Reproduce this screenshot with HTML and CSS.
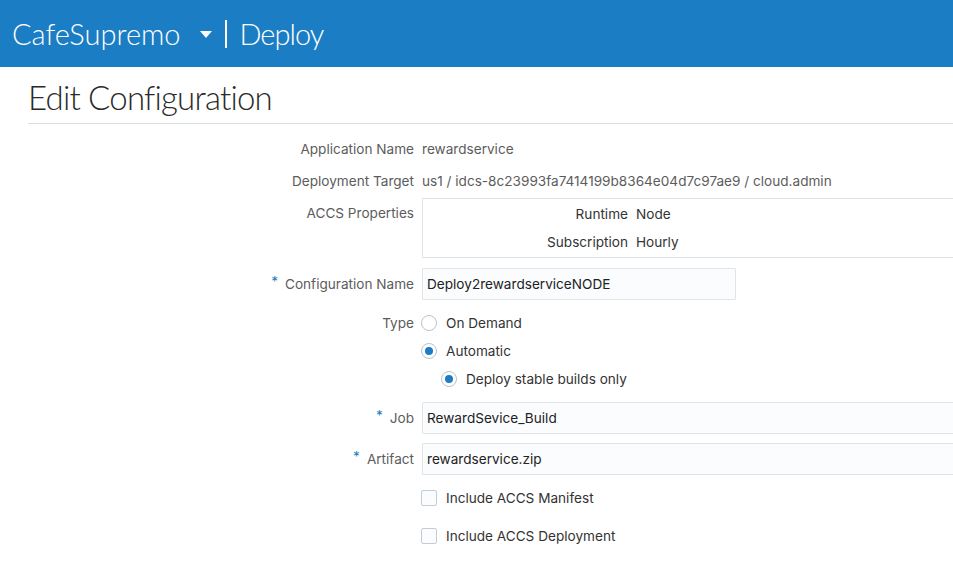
FILE: index.html
```html
<!DOCTYPE html>
<html lang="en">
<head>
<meta charset="utf-8">
<title>Edit Configuration</title>
<link rel="stylesheet" href="styles.css">
</head>
<body>
<header class="topbar">
  <span class="brand">CafeSupremo</span>
  <span class="caret"></span>
  <span class="divider"></span>
  <span class="section">Deploy</span>
</header>
<main class="page">
  <h1 class="title">Edit Configuration</h1>
  <div class="form">
    <div class="row r-text first">
      <div class="label">Application Name</div>
      <div class="value ro">rewardservice</div>
    </div>
    <div class="row r-text">
      <div class="label">Deployment Target</div>
      <div class="value ro">us1 / idcs-8c23993fa7414199b8364e04d7c97ae9 / cloud.admin</div>
    </div>
    <div class="row r-box">
      <div class="label box-label">ACCS Properties</div>
      <div class="props">
        <div class="prop"><span class="prop-label">Runtime</span><span class="prop-value">Node</span></div>
        <div class="prop"><span class="prop-label">Subscription</span><span class="prop-value">Hourly</span></div>
      </div>
    </div>
    <div class="row r-input gap10">
      <div class="label"><span class="req">*</span>Configuration Name</div>
      <div class="input short">Deploy2rewardserviceNODE</div>
    </div>
    <div class="row r-choice gap9">
      <div class="label">Type</div>
      <div class="choice"><span class="radio"></span><span>On Demand</span></div>
    </div>
    <div class="row r-choice">
      <div class="label"></div>
      <div class="choice"><span class="radio on"></span><span>Automatic</span></div>
    </div>
    <div class="row r-choice">
      <div class="label"></div>
      <div class="choice nested"><span class="radio on"></span><span>Deploy stable builds only</span></div>
    </div>
    <div class="row r-input gap9">
      <div class="label"><span class="req">*</span>Job</div>
      <div class="input wide">RewardSevice_Build</div>
    </div>
    <div class="row r-input gap9">
      <div class="label"><span class="req">*</span>Artifact</div>
      <div class="input wide">rewardservice.zip</div>
    </div>
    <div class="row r-choice gap9">
      <div class="label"></div>
      <div class="choice"><span class="check"></span><span>Include ACCS Manifest</span></div>
    </div>
    <div class="row r-choice gap10">
      <div class="label"></div>
      <div class="choice"><span class="check"></span><span>Include ACCS Deployment</span></div>
    </div>
  </div>
</main>
</body>
</html>
```
FILE: styles.css
```css
html, body {
  margin: 0;
  padding: 0;
  background: #ffffff;
  overflow: hidden;
}
body {
  font-family: "Inter", "Liberation Sans", sans-serif;
  font-size: 13.6px;
  color: #333333;
}
.topbar {
  height: 67px;
  background: #1b7dc3;
  display: flex;
  align-items: center;
  padding-left: 12px;
  color: #ffffff;
  font-family: "Lato", "Roboto", sans-serif;
  font-weight: 300;
  font-size: 29px;
}
.caret {
  width: 0;
  height: 0;
  border-left: 6px solid transparent;
  border-right: 6px solid transparent;
  border-top: 7px solid #ffffff;
  margin-left: 19px;
  margin-top: 1px;
}
.divider {
  width: 2px;
  height: 28px;
  background: #ffffff;
  margin-left: 13px;
  margin-top: 1px;
}
.section {
  margin-left: 13px;
  letter-spacing: -1px;
}
.page {
  padding-left: 28px;
}
.title {
  margin: 10px 0 0 0;
  font-family: "Lato", "Roboto", sans-serif;
  font-size: 33px;
  font-weight: 300;
  line-height: 40px;
  letter-spacing: -0.8px;
  color: #2a2a2a;
  padding-bottom: 6px;
  border-bottom: 1px solid #d6dfe6;
}
.row {
  display: grid;
  grid-template-columns: 386px 1fr;
  column-gap: 8px;
}
.first { margin-top: 9px; }
.gap9 { margin-top: 9px; }
.gap10 { margin-top: 10px; }
.r-text { line-height: 32px; }
.r-box { margin-top: 1px; }
.r-input { line-height: 32px; }
.r-choice { line-height: 28px; }
.label {
  text-align: right;
  color: #5c5c5c;
  white-space: nowrap;
}
.box-label { line-height: 30px; }
.value.ro { color: #5c5c5c; white-space: nowrap; }
.req {
  color: #1b7dc3;
  margin-right: 7px;
  position: relative;
  top: -3px;
}
.props {
  border: 1px solid #dfe4e7;
  padding: 1px 0;
  width: 560px;
}
.prop {
  display: grid;
  grid-template-columns: 205px 1fr;
  column-gap: 8px;
  line-height: 28px;
}
.prop-label { text-align: right; color: #333; }
.prop-value { color: #333; }
.input {
  box-sizing: border-box;
  height: 32px;
  line-height: 30px;
  border: 1px solid #dfe4e7;
  background: #fbfcfe;
  padding-left: 4px;
  color: #222;
  border-radius: 1px;
}
.input.short { width: 314px; }
.input.wide { width: 560px; }
.choice {
  display: flex;
  align-items: center;
  margin-left: -1px;
  color: #333;
}
.choice.nested { margin-left: 19px; }
.radio, .check {
  box-sizing: border-box;
  width: 16px;
  height: 16px;
  border: 1px solid #b9c3cb;
  background: #ffffff;
  margin-right: 9px;
  flex: none;
  display: flex;
  align-items: center;
  justify-content: center;
}
.radio { border-radius: 50%; }
.radio.on::after {
  content: "";
  width: 8px;
  height: 8px;
  border-radius: 50%;
  background: #1b7dc3;
}
.check {
  border-radius: 2px;
  background: #fbfcfe;
  border-color: #c3ccd4;
}
```
